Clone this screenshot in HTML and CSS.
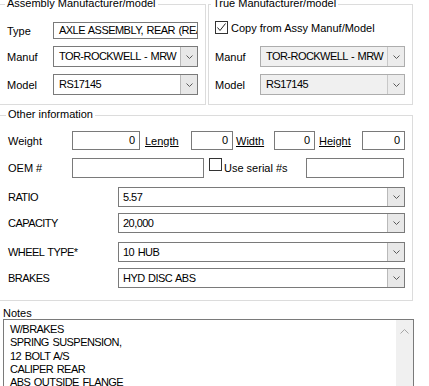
FILE: index.html
```html
<!DOCTYPE html>
<html>
<head>
<meta charset="utf-8">
<link rel="stylesheet" href="styles.css">
</head>
<body>
<div class="page">
  <div class="top">
    <div class="group g-left">
      <span class="legend">Assembly Manufacturer/model</span>
      <div class="row r-type">
        <span class="lbl lw46">Type</span>
        <div class="input t w145">AXLE ASSEMBLY, REAR (REAR)</div>
      </div>
      <div class="row r-c7">
        <span class="lbl lw46">Manuf</span>
        <div class="combo w145"><span class="val t">TOR-ROCKWELL - MRW</span><span class="btn"><svg width="7" height="4" viewBox="0 0 7 4"><polyline points="0.5,0.5 3.5,3.5 6.5,0.5" fill="none" stroke="#5a5a5a" stroke-width="1"/></svg></span></div>
      </div>
      <div class="row r-c7">
        <span class="lbl lw46">Model</span>
        <div class="combo w145"><span class="val t">RS17145</span><span class="btn"><svg width="7" height="4" viewBox="0 0 7 4"><polyline points="0.5,0.5 3.5,3.5 6.5,0.5" fill="none" stroke="#5a5a5a" stroke-width="1"/></svg></span></div>
      </div>
    </div>
    <div class="group g-right">
      <span class="legend">True Manufacturer/model</span>
      <div class="row r-check">
        <span class="checkbox"><svg width="11" height="11" viewBox="0 0 11 11"><polyline points="1.5,5.5 4,8.5 9.5,1.5" fill="none" stroke="#222" stroke-width="1"/></svg></span>
        <span class="cblabel">Copy from Assy Manuf/Model</span>
      </div>
      <div class="row r-c12">
        <span class="lbl lw45">Manuf</span>
        <div class="combo disabled w145"><span class="val t">TOR-ROCKWELL - MRW</span><span class="btn"><svg width="7" height="4" viewBox="0 0 7 4"><polyline points="0.5,0.5 3.5,3.5 6.5,0.5" fill="none" stroke="#5a5a5a" stroke-width="1"/></svg></span></div>
      </div>
      <div class="row r-c7">
        <span class="lbl lw45">Model</span>
        <div class="combo disabled w145"><span class="val t">RS17145</span><span class="btn"><svg width="7" height="4" viewBox="0 0 7 4"><polyline points="0.5,0.5 3.5,3.5 6.5,0.5" fill="none" stroke="#5a5a5a" stroke-width="1"/></svg></span></div>
      </div>
    </div>
  </div>

  <div class="group g-other">
    <span class="legend">Other information</span>
    <div class="row r-weight">
      <span class="lbl lw64">Weight</span>
      <div class="input num w68">0</div>
      <span class="ul ul-length">Length</span>
      <div class="input num w42">0</div>
      <span class="ul ul-width">Width</span>
      <div class="input num w41">0</div>
      <span class="ul ul-height">Height</span>
      <div class="input num w43">0</div>
    </div>
    <div class="row r-oem">
      <span class="lbl lw64">OEM #</span>
      <div class="input w132 h20"></div>
      <span class="checkbox cb-serial"></span>
      <span class="cblabel serial">Use serial #s</span>
      <div class="input w98 h20 oem2"></div>
    </div>
    <div class="row r-m9">
      <span class="lbl t lw110">RATIO</span>
      <div class="combo big w287"><span class="val t">5.57</span><span class="btn"><svg width="7" height="4" viewBox="0 0 7 4"><polyline points="0.5,0.5 3.5,3.5 6.5,0.5" fill="none" stroke="#5a5a5a" stroke-width="1"/></svg></span></div>
    </div>
    <div class="row r-m6">
      <span class="lbl t lw110">CAPACITY</span>
      <div class="combo big w287"><span class="val t">20,000</span><span class="btn"><svg width="7" height="4" viewBox="0 0 7 4"><polyline points="0.5,0.5 3.5,3.5 6.5,0.5" fill="none" stroke="#5a5a5a" stroke-width="1"/></svg></span></div>
    </div>
    <div class="row r-m9">
      <span class="lbl t lw110">WHEEL TYPE*</span>
      <div class="combo big w287"><span class="val t">10 HUB</span><span class="btn"><svg width="7" height="4" viewBox="0 0 7 4"><polyline points="0.5,0.5 3.5,3.5 6.5,0.5" fill="none" stroke="#5a5a5a" stroke-width="1"/></svg></span></div>
    </div>
    <div class="row r-m6">
      <span class="lbl t lw110">BRAKES</span>
      <div class="combo big w287"><span class="val t">HYD DISC ABS</span><span class="btn"><svg width="7" height="4" viewBox="0 0 7 4"><polyline points="0.5,0.5 3.5,3.5 6.5,0.5" fill="none" stroke="#5a5a5a" stroke-width="1"/></svg></span></div>
    </div>
  </div>

  <div class="notes-label">Notes</div>
  <div class="notes">
    <div class="notes-text t">
      <div>W/BRAKES</div>
      <div>SPRING SUSPENSION,</div>
      <div>12 BOLT A/S</div>
      <div>CALIPER REAR</div>
      <div>ABS OUTSIDE FLANGE</div>
    </div>
    <div class="scrollbar"><svg width="9" height="5" viewBox="0 0 9 5"><polyline points="0.5,4.5 4.5,0.5 8.5,4.5" fill="none" stroke="#a6a6a6" stroke-width="1"/></svg></div>
  </div>
</div>
</body>
</html>
```

FILE: styles.css
```css
body {
  margin: 0;
  background: #fff;
  font-family: "Liberation Sans", Arial, sans-serif;
  font-size: 11px;
  color: #000;
}

.page {
  width: 429px;
  height: 386px;
  overflow: hidden;
}

.t {
  letter-spacing: -0.55px;
  word-spacing: 1px;
}

.top {
  display: flex;
  gap: 2px;
  margin-top: 4px;
}

.group {
  box-sizing: border-box;
  border: 1px solid #dcdcdc;
  display: flex;
  flex-direction: column;
}

.g-left {
  width: 206px;
  height: 101px;
  border-left: none;
  padding: 0 7px;
}

.g-right {
  width: 205px;
  height: 101px;
  padding: 0 7px 0 6px;
}

.g-right .legend {
  margin-left: -4px;
}

.g-other {
  margin-top: 10px;
  width: 413px;
  height: 186px;
  border-left: none;
  padding: 0 7px 0 8px;
}

.legend {
  align-self: flex-start;
  margin: -8px 0 0 -2px;
  padding: 0 2px;
  background: #fff;
  line-height: 13px;
  height: 13px;
  white-space: nowrap;
}

.row {
  display: flex;
  align-items: center;
}

.r-type { margin-top: 12px; }
.r-c7 { margin-top: 7px; }
.r-c12 { margin-top: 12px; }
.r-check { margin-top: 11px; height: 13px; }
.r-weight { margin-top: 10px; }
.r-oem { margin-top: 8px; }
.r-m9 { margin-top: 9px; }
.r-m6 { margin-top: 6px; }

.lbl {
  flex: none;
  white-space: nowrap;
}

.lw45 { width: 45px; }
.lw46 { width: 46px; }
.lw64 { width: 64px; }
.lw110 { width: 110px; }

.input {
  flex: none;
  box-sizing: border-box;
  height: 19px;
  line-height: 17px;
  border: 1px solid #7a7a7a;
  padding: 0 5px;
  white-space: nowrap;
  overflow: hidden;
  background: #fff;
}

.r-type .input {
  height: 17px;
  line-height: 15px;
}

.h20 { height: 20px; }

.num {
  text-align: right;
  padding: 0 4px;
}

.w41 { width: 41px; }
.w42 { width: 42px; }
.w43 { width: 43px; }
.w68 { width: 68px; }
.w98 { width: 98px; }
.w132 { width: 132px; }
.w145 { width: 145px; }
.w287 { width: 287px; }

.ul {
  flex: none;
  box-sizing: border-box;
  text-decoration: underline;
  white-space: nowrap;
}

.ul-length { width: 51px; padding-left: 5px; }
.ul-width { width: 41px; padding-left: 3px; }
.ul-height { width: 47px; padding-left: 4px; }

.combo {
  flex: none;
  box-sizing: border-box;
  height: 21px;
  border: 1px solid #7a7a7a;
  display: flex;
  background: #fff;
}

.combo.big {
  height: 20px;
}

.combo .val {
  flex: 1;
  padding-left: 5px;
  line-height: 19px;
  white-space: nowrap;
  overflow: hidden;
}

.combo.big .val {
  padding-left: 4px;
  line-height: 18px;
}

.combo.disabled {
  background: #f0f0f0;
  border-color: #adadad;
}

.btn {
  flex: none;
  width: 16px;
  background: #e8e8e8;
  border-left: 1px solid #b9b9b9;
  display: flex;
  align-items: center;
  justify-content: center;
}

.combo.disabled .btn {
  background: #ececec;
  border-left-color: #c8c8c8;
}

.checkbox {
  flex: none;
  box-sizing: border-box;
  width: 13px;
  height: 13px;
  border: 1px solid #333;
  background: #fff;
  display: flex;
  align-items: center;
  justify-content: center;
}

.cblabel {
  margin-left: 3px;
  white-space: nowrap;
}

.cb-serial {
  margin-left: 5px;
  align-self: flex-start;
}

.serial {
  margin-left: 2px;
}

.oem2 {
  margin-left: auto;
  margin-right: 1px;
}

.notes-label {
  margin-top: 6px;
  padding-left: 3px;
  line-height: 12px;
  height: 12px;
}

.notes {
  margin-left: 3px;
  width: 411px;
  height: 90px;
  box-sizing: border-box;
  border: 1px solid #7a7a7a;
  display: flex;
}

.notes-text {
  flex: 1;
  padding: 3px 0 0 6px;
  line-height: 13.25px;
}

.scrollbar {
  flex: none;
  width: 17px;
  background: #f0f0f0;
  display: flex;
  justify-content: center;
  align-items: flex-start;
  padding-top: 9px;
  box-sizing: border-box;
}
```
